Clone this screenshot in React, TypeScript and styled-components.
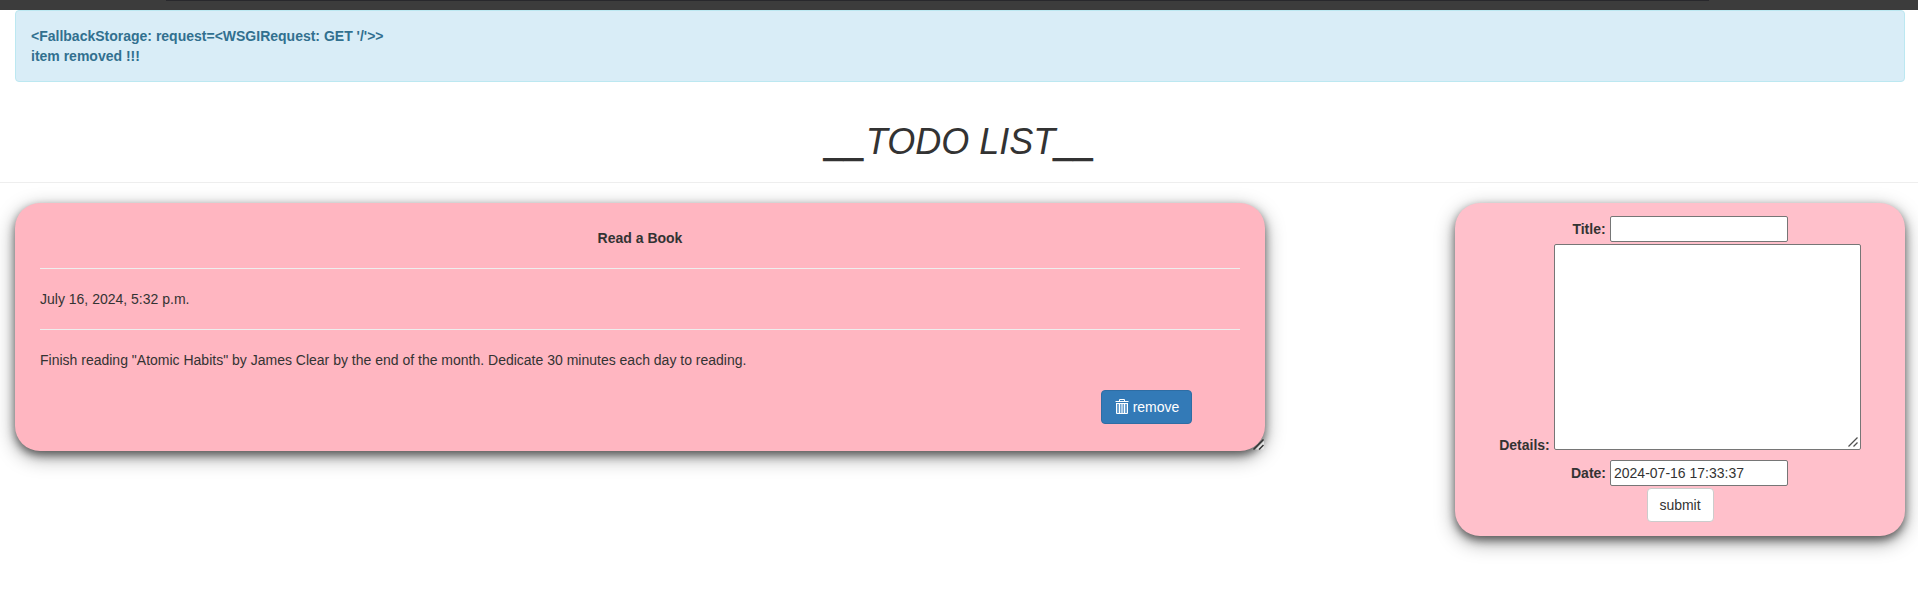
import React from "react";
import styled, { createGlobalStyle } from "styled-components";

const GlobalStyle = createGlobalStyle`
  *, *::before, *::after { box-sizing: border-box; }
  body {
    margin: 0;
    min-height: 100vh;
    background: #fff;
    color: #333;
    font: 14px/20px "Liberation Sans", Arial, sans-serif;
  }
`;

const TopBar = styled.div`
  height: 10px;
  padding: 0 209px 0 166px;
  background: #3c3c3c;
`;

const TopBarEdge = styled.div`
  height: 1px;
  background: #28282c;
`;

const Alert = styled.div`
  margin: 0 13px 40px 15px;
  padding: 15px;
  border: 1px solid #bce8f1;
  border-radius: 4px;
  background: #d9edf7;
  color: #31708f;
  font-weight: 700;
`;

const Heading = styled.h1`
  margin: 0;
  height: 40px;
  padding-left: 3px;
  font-size: 36px;
  font-weight: 400;
  font-style: italic;
  line-height: 39.6px;
  text-align: center;
`;

const Underscores = styled.span`
  display: inline-block;
  transform: translateY(1px);
  text-shadow: 0 1px 0 #333, 0 2px 0 #333;
`;

const Rule = styled.hr`
  margin: 20px 0;
  border: 0;
  border-top: 1px solid #eee;
`;

const Columns = styled.main`
  display: flex;
  justify-content: space-between;
  align-items: flex-start;
  padding: 0 13px 0 15px;
`;

const Card = styled.section`
  border-radius: 25px;
  box-shadow: 0 4px 8px 0 rgba(0, 0, 0, 0.5), 0 6px 20px 0 rgba(0, 0, 0, 0.39);
`;

const TodoCard = styled(Card)`
  position: relative;
  width: 1250px;
  height: 248px;
  padding: 25px;
  background: #ffb6c1;
`;

const TodoTitle = styled.div`
  font-weight: 700;
  text-align: center;
`;

const Actions = styled.div`
  display: flex;
  justify-content: flex-end;
  margin-top: 20px;
  padding-right: 48px;
`;

const Button = styled.button<{ $primary?: boolean }>`
  display: flex;
  align-items: center;
  justify-content: center;
  gap: 4px;
  width: ${(p) => (p.$primary ? "91px" : "67px")};
  height: 34px;
  padding: ${(p) => (p.$primary ? "0 0 0 1px" : "0")};
  border: 1px solid ${(p) => (p.$primary ? "#2e6da4" : "#ccc")};
  border-radius: 4px;
  background: ${(p) => (p.$primary ? "#337ab7" : "#fff")};
  color: ${(p) => (p.$primary ? "#fff" : "#333")};
  font: inherit;
`;

const FormCard = styled(Card)`
  display: flex;
  flex-direction: column;
  align-items: center;
  gap: 2px;
  width: 450px;
  padding: 13px 0 14px;
  background: #ffc0cb;
`;

const Field = styled.label<{ $multiline?: boolean; $shift?: boolean }>`
  display: flex;
  align-items: ${(p) => (p.$multiline ? "flex-end" : "center")};
  gap: 4px;
  margin-bottom: ${(p) => (p.$multiline ? "8px" : "0")};
  margin-right: ${(p) => (p.$shift ? "1px" : "0")};
`;

const FieldName = styled.span<{ $low?: boolean }>`
  font-weight: 700;
  margin-bottom: ${(p) => (p.$low ? "-5px" : "0")};
`;

const Input = styled.input`
  width: 178px;
  height: 26px;
  padding: 1px 3px;
  border: 1px solid #767676;
  border-radius: 2px;
  background: #fff;
  color: #333;
  font: inherit;
`;

const TextAreaFrame = styled.div`
  position: relative;
  display: flex;
`;

const TextArea = styled.textarea`
  width: 307px;
  height: 206px;
  padding: 2px;
  border: 1px solid #767676;
  border-radius: 2px;
  background: #fff;
  font: inherit;
  resize: none;
`;

const Grip = styled.svg<{ $inset: number }>`
  position: absolute;
  right: ${(p) => p.$inset}px;
  bottom: ${(p) => p.$inset}px;
`;

const CardGrip = () => (
  <Grip $inset={1} width="12" height="11" viewBox="0 0 12 11" aria-hidden="true">
    <path d="M3.5 10.5 12 2v8.5z" fill="#e4e4e4" />
    <path d="M1.5 10.5 11.5.5M7 10.5 11.5 6" fill="none" stroke="#333" strokeWidth="1.5" />
  </Grip>
);

const TextAreaGrip = () => (
  <Grip $inset={2} width="11" height="11" viewBox="0 0 11 11" aria-hidden="true">
    <path d="M.5 9.5 9.5.5M5.5 9.5l4-4" fill="none" stroke="#505050" strokeWidth="1.3" />
  </Grip>
);

const TrashIcon = () => (
  <svg width="14" height="16" viewBox="0 0 14 16" aria-hidden="true">
    <path d="M4.5 2V.5h5V2M.5 2.5h13" fill="none" stroke="#fff" />
    <path d="M2 4h10v11H2z" fill="#6fa3d0" />
    <path d="M1.5 4v10.5h11V4M1.5 4.5h11M4.5 5v9M7 5v9M9.5 5v9" fill="none" stroke="#fff" />
  </svg>
);

export default function App() {
  return (
    <>
      <GlobalStyle />
      <TopBar>
        <TopBarEdge />
      </TopBar>
      <Alert>
        <div>{"<FallbackStorage: request=<WSGIRequest: GET '/'>>"}</div>
        <div>item removed !!!</div>
      </Alert>
      <Heading>
        <Underscores>__</Underscores>TODO LIST<Underscores>__</Underscores>
      </Heading>
      <Rule />
      <Columns>
        <TodoCard>
          <TodoTitle>Read a Book</TodoTitle>
          <Rule />
          <div>July 16, 2024, 5:32 p.m.</div>
          <Rule />
          <div>
            Finish reading "Atomic Habits" by James Clear by the end of the month. Dedicate 30
            minutes each day to reading.
          </div>
          <Actions>
            <Button $primary>
              <TrashIcon />
              remove
            </Button>
          </Actions>
          <CardGrip />
        </TodoCard>
        <FormCard>
          <Field>
            <FieldName>Title:</FieldName>
            <Input />
          </Field>
          <Field $multiline>
            <FieldName $low>Details:</FieldName>
            <TextAreaFrame>
              <TextArea />
              <TextAreaGrip />
            </TextAreaFrame>
          </Field>
          <Field $shift>
            <FieldName>Date:</FieldName>
            <Input defaultValue="2024-07-16 17:33:37" />
          </Field>
          <Button>submit</Button>
        </FormCard>
      </Columns>
    </>
  );
}
